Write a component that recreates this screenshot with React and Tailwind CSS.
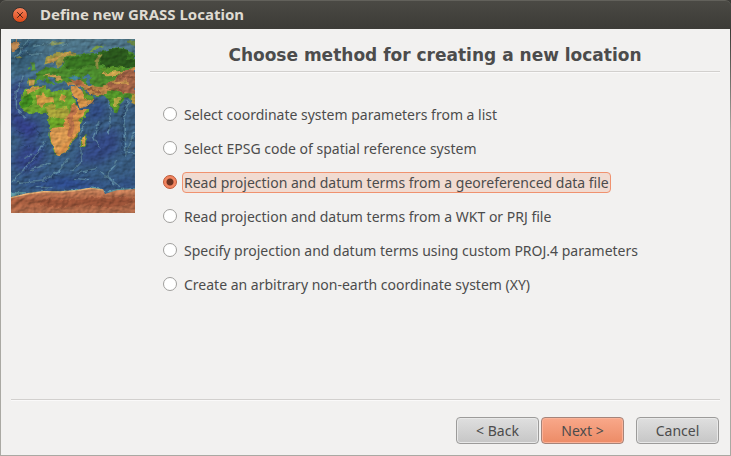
import React, { useState } from "react";

const METHODS = [
  "Select coordinate system parameters from a list",
  "Select EPSG code of spatial reference system",
  "Read projection and datum terms from a georeferenced data file",
  "Read projection and datum terms from a WKT or PRJ file",
  "Specify projection and datum terms using custom PROJ.4 parameters",
  "Create an arbitrary non-earth coordinate system (XY)",
];

function ReliefMap() {
  return (
    <svg
      viewBox="33 27 372 522"
      className="block h-[174px] w-[124px] shrink-0"
      role="img"
      aria-label="Relief map of Europe, Africa and Asia"
    >
      <defs>
        <linearGradient id="sea" x1="0" y1="0" x2="0" y2="1">
          <stop offset="0" stopColor="#4f7587" />
          <stop offset="0.22" stopColor="#456f8c" />
          <stop offset="0.42" stopColor="#3a5d80" />
          <stop offset="0.6" stopColor="#3a5f82" />
          <stop offset="0.85" stopColor="#365880" />
          <stop offset="1" stopColor="#4b7488" />
        </linearGradient>
        <linearGradient id="ice" x1="0" y1="0" x2="0" y2="1">
          <stop offset="0" stopColor="#cc8860" />
          <stop offset="0.5" stopColor="#a55c3e" />
          <stop offset="1" stopColor="#b06c4c" />
        </linearGradient>
        <filter id="relief" x="0" y="0" width="100%" height="100%" colorInterpolationFilters="sRGB">
          <feTurbulence type="fractalNoise" baseFrequency="0.05 0.07" numOctaves="3" seed="8" result="n" />
          <feDiffuseLighting in="n" surfaceScale="3" lightingColor="#ffffff" result="l">
            <feDistantLight azimuth="225" elevation="52" />
          </feDiffuseLighting>
          <feComposite in="SourceGraphic" in2="l" operator="arithmetic" k1="1" k2="0.2" k3="0" k4="0" />
        </filter>
        <filter id="rough" x="-5%" y="-5%" width="110%" height="110%" colorInterpolationFilters="sRGB">
          <feTurbulence type="fractalNoise" baseFrequency="0.06" numOctaves="3" seed="3" />
          <feDisplacementMap in="SourceGraphic" scale="14" xChannelSelector="R" yChannelSelector="G" />
        </filter>
        <filter id="soft" x="-20%" y="-20%" width="140%" height="140%" colorInterpolationFilters="sRGB">
          <feGaussianBlur stdDeviation="12" />
        </filter>
        <clipPath id="africa">
          <path d="M78 180 105 168 138 166 141 178 165 185 190 178 212 182 216 198 228 220 240 240 268 240 262 252 245 270 236 284 238 300 230 322 215 336 208 352 195 370 175 378 165 375 158 350 148 322 151 292 140 270 145 258 134 249 110 250 87 252 65 235 60 215 65 198Z" />
        </clipPath>
      </defs>
      <g filter="url(#relief)">
        <rect x="33" y="27" width="372" height="522" fill="url(#sea)" />
        <g filter="url(#soft)">
          <path d="M33 170 75 140 62 190 50 240 80 268 120 275 110 330 60 320 33 280Z" fill="#333f86" />
          <path d="M280 210 318 215 310 270 270 275 250 270Z" fill="#304a82" />
          <path d="M75 330 140 360 120 410 70 430 33 400Z" fill="#334585" />
          <path d="M270 320 350 290 360 360 300 400 225 400Z" fill="#334882" />
          <path d="M60 460 200 445 330 470 390 450 400 465 310 472 200 475Z" fill="#2b4690" />
          <path d="M33 27H130L95 100 60 130 33 120Z" fill="#345a72" />
        </g>
        <g fill="none" stroke="#6f9dab" strokeWidth="4" opacity="0.6" filter="url(#rough)">
          <path d="M135 335 105 380 60 430 33 455M205 385 180 420 130 450 50 458" />
          <path d="M325 205 332 250 325 310M385 210 372 270 375 380M255 275 240 310 245 395 215 425" />
          <path d="M300 270 280 320 300 360M350 390 320 440 345 465M405 300 380 365 405 372" />
          <path d="M70 140 48 185 50 240 75 265" />
          <path d="M85 27 65 60 40 85M100 50 150 38 205 45M60 50 90 75 125 70" />
          <path d="M70 385 100 372M90 420 150 400M230 430 290 415M225 445 270 450M300 425 360 470M310 440 345 450M110 470 160 475" />
        </g>
        <g fill="none" stroke="#223a5e" strokeWidth="3" opacity="0.6" filter="url(#rough)">
          <path d="M141 339 111 384 66 434M186 424 136 454M379 214 366 274 369 380M306 274 287 322M320 445 340 470M230 435 285 421M91 32 71 64 46 89M66 56 92 80M45 300 75 310M100 290 120 320M60 345 90 350" />
        </g>
        <g filter="url(#rough)">
          <path d="M33 42 50 30 58 40 46 66 36 70Z" fill="#bb8650" />
          <path d="M48 80 58 75 68 80 62 85 49 85Z" fill="#80884b" />
          <path d="M265 65 285 50 315 46 295 56 273 67Z" fill="#759742" />
          <path d="M145 43 165 34 192 38 170 44Z" fill="#889760" />
          <path d="M380 32H405V48L382 41Z" fill="#638044" />
          <path d="M91 97 103 94 107 120 94 124 96 110ZM82 108 90 111 85 121Z" fill="#56913a" />
          <path d="M133 104 137 87 165 69 205 65 232 70 230 80 200 79 190 100 177 112 168 104 165 85 150 96 145 105Z" fill="#999342" />
          <path d="M192 80 222 75 250 72 280 69 310 68 345 52 375 57 405 72V222L391 211 386 201 375 206 360 225 350 250 342 248 334 226 323 204 307 199 289 198 272 190 246 173 250 164 244 151 220 158 199 161 190 153 180 163 170 158 162 146 150 141 148 151 163 165 155 166 137 149 111 150 104 165 87 168 84 147 105 147 107 130 126 119 140 111 158 116 183 111 193 100Z" fill="#4b8a2d" />
          <path d="M202 84 280 70 346 55 405 76V108L350 111 317 104 274 107 225 119 190 112Z" fill="#387322" />
          <path d="M303 72 345 53 385 60 380 90 405 91V110L342 117 300 103Z" fill="#2b591d" />
          <path d="M148 86 203 67 217 71 179 81 166 94 139 103Z" fill="#bb934a" />
          <path d="M297 70 308 74 294 92 296 117 285 112 288 88Z" fill="#8c8b42" />
          <path d="M300 118 340 108 375 112 350 126 310 130Z" fill="#5d9a2c" />
          <path d="M85 149 105 149 102 166 87 167ZM125 138 155 132 182 138 188 151 174 152 150 139Z" fill="#c49a50" />
          <path d="M196 154 220 157 241 149 258 162 275 169 307 171 338 151 405 109V190L370 190 338 176 321 195 275 194 257 180 245 169 217 164 201 165Z" fill="#bd8548" />
          <path d="M317 158 345 152 372 121 405 120V192L370 187 340 175 326 171Z" fill="#a66648" />
          <path d="M305 133 343 124 379 122 347 138 318 139Z" fill="#c9a04c" />
          <path d="M330 154 380 151 389 161 350 163Z" fill="#cb9650" />
          <path d="M322 182 342 183 371 199 358 223 350 247 339 240 329 213 319 200Z" fill="#549629" />
          <path d="M341 205 364 204 350 231 342 225Z" fill="#b3a844" />
          <path d="M395 193 405 195V224L397 220 390 205Z" fill="#ac8e3b" />
          <path d="M213 169 231 168 250 191 265 198 286 208 279 219 244 235 235 218 220 197 212 181Z" fill="#d4934a" />
          <path d="M246 173 262 190 286 204 275 214 252 206Z" fill="#5c962c" />
          <path d="M211 150 230 147 246 155 255 168 230 166Z" fill="#b06a48" />
          <path d="M247 139 268 132 274 144 268 148 274 169 265 170 258 148 249 147Z" fill="#42738b" />
          <path d="M205 145 226 135 242 145 230 149Z" fill="#3f7e91" />
          <path d="M322 175 350 178 375 188M350 145 385 140 405 146M262 178 300 186" fill="none" stroke="#7c4632" strokeWidth="4" opacity="0.6" />
        </g>
        <g filter="url(#rough)">
          <path d="M78 180 105 168 138 166 141 178 165 185 190 178 212 182 216 198 228 220 240 240 268 240 262 252 245 270 236 284 238 300 230 322 215 336 208 352 195 370 175 378 165 375 158 350 148 322 151 292 140 270 145 258 134 249 110 250 87 252 65 235 60 215 65 198Z" fill="#6ba42e" />
          <g clipPath="url(#africa)">
            <path d="M80 174 134 167 109 181 82 190Z" fill="#c9984a" />
            <path d="M64 205 89 190 100 209 87 230 63 235Z" fill="#3f8a1f" />
            <path d="M108 199 127 190 140 202 160 202 163 215 138 219 122 231 111 218ZM180 192 199 198 195 216 182 213Z" fill="#cf9a46" />
            <path d="M138 231 158 222 169 236 202 230 209 265 177 266 158 260 144 270Z" fill="#a9a43b" />
            <path d="M220 219 245 239 260 241 238 270 239 310 220 336 193 374 169 382 156 337 146 302 172 293 188 270 203 262Z" fill="#d48f49" />
            <path d="M211 234 224 232 233 245 218 257 224 292 214 324 203 315 211 290 202 265Z" fill="#b87048" />
            <path d="M151 267 177 264 196 274 188 292 158 294Z" fill="#69a127" />
            <path d="M154 294 183 291 206 304 204 334 184 350 169 373 152 329Z" fill="#da9a52" />
            <path d="M226 322 240 300 236 330 216 352 204 374 196 374 210 340Z" fill="#5f962b" />
          </g>
          <path d="M258 313 260 326 252 349 244 352 245 330Z" fill="#dba14b" stroke="#64962f" strokeWidth="3" />
        </g>
        <path d="M33 500 80 489 130 483 180 483 230 479 272 472 310 477 318 487 350 477 405 474V487H33Z" fill="#5d96a0" filter="url(#rough)" />
        <path d="M33 503 55 500 80 492 130 485 180 486 230 482 270 475 310 480 315 492 350 481 405 477V549H33Z" fill="url(#ice)" />
        <path d="M33 503 80 492 130 485 180 486 230 482 270 475 310 480" fill="none" stroke="#e0aa70" strokeWidth="4" />
        <path d="M130 508 210 510 290 500 315 505 360 500 405 505 390 520 330 532 250 526 170 534 120 524Z" fill="#8c4730" opacity="0.5" filter="url(#rough)" />
      </g>
    </svg>
  );
}

function Rule() {
  return <div className="h-[2px] border-t border-[#d2d0ce] bg-[#faf9f9]" />;
}

function DialogButton({ children, primary = false }) {
  const tone = primary
    ? "border-[#a5847a] bg-linear-to-b from-[#f9a88a] to-[#ec8b66] shadow-[inset_0_0_0_1px_#fbb298]"
    : "border-[#9c9b9a] bg-linear-to-b from-[#dfdfdf] to-[#c6c6c6] shadow-[inset_0_0_0_1px_#e8e8e8]";
  return (
    <button type="button" className={`h-[27px] w-[83px] rounded border text-sm text-[#4c4c4c] ${tone}`}>
      {children}
    </button>
  );
}

export default function App() {
  const [selected, setSelected] = useState(2);
  return (
    <div className="flex min-h-screen flex-col bg-linear-to-b from-[#3c3b37] from-[30px] to-[#aaa9a3] to-[130px] px-px pb-px font-['Noto_Sans','Open_Sans',sans-serif] text-[#4c4c4c]">
      <header className="-mx-px flex h-[29px] items-center gap-3 rounded-t-md border-t border-[#62615b] bg-linear-to-b from-[#4a4944] to-[#3c3b37] px-3">
        <button
          type="button"
          aria-label="Close"
          className="flex size-4 items-center justify-center rounded-full border border-[#34322f] bg-linear-to-b from-[#f58159] to-[#dc4814]"
        >
          <svg viewBox="0 0 8 8" className="size-2" fill="none" stroke="#4b2417" strokeWidth="1">
            <path d="M1.2 1.2 6.8 6.8M6.8 1.2 1.2 6.8" />
          </svg>
        </button>
        <h1 className="pb-[2px] text-[15px] leading-5 font-bold text-[#dfdbd2]">Define new GRASS Location</h1>
      </header>

      <main className="flex flex-1 flex-col bg-[#f2f1f0]">
        <div className="flex flex-1 gap-[15px] px-[10px] pt-[10px]">
          <ReliefMap />
          <section className="min-w-0 flex-1">
            <h2
              id="method-heading"
              className="h-8 text-center font-['DejaVu_Sans',sans-serif] text-[17px] leading-8 font-bold"
            >
              Choose method for creating a new location
            </h2>
            <Rule />
            <div role="radiogroup" aria-labelledby="method-heading" className="mt-[30px] flex flex-col gap-3 pl-[13px]">
              {METHODS.map((label, i) => (
                <label key={label} className="flex h-[22px] items-center gap-[5px]">
                  <input
                    type="radio"
                    name="method"
                    checked={selected === i}
                    onChange={() => setSelected(i)}
                    className="peer size-[14px] shrink-0 appearance-none rounded-full border border-[#a09f9d] bg-white checked:border-[#bb5634] checked:bg-[radial-gradient(circle,#6b3322_0_3px,#f28560_4px)]"
                  />
                  <span className="rounded border border-transparent px-px text-sm leading-[19px] whitespace-nowrap peer-checked:border-[#f0926f] peer-checked:bg-[#f1dbd1]">
                    {label}
                  </span>
                </label>
              ))}
            </div>
          </section>
        </div>

        <footer className="px-[10px] pb-[11px]">
          <Rule />
          <div className="mt-4 flex justify-end gap-3 pr-px">
            <div className="flex gap-[2px]">
              <DialogButton>&lt; Back</DialogButton>
              <DialogButton primary>Next &gt;</DialogButton>
            </div>
            <DialogButton>Cancel</DialogButton>
          </div>
        </footer>
      </main>
    </div>
  );
}
